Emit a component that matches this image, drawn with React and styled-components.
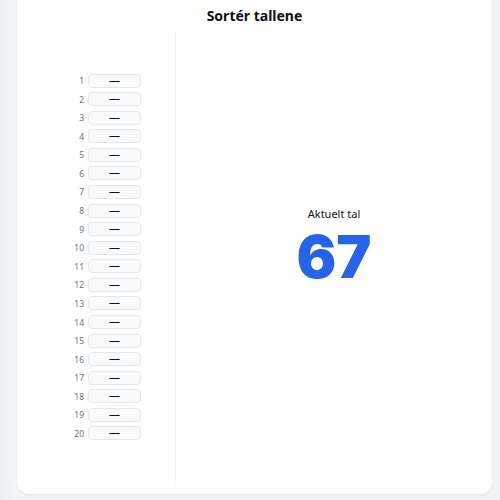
import React from 'react'
import styled, { createGlobalStyle } from 'styled-components'

const GlobalStyle = createGlobalStyle`
  html, body {
    margin: 0;
    padding: 0;
    background: linear-gradient(to right, #eceef1 0px, #f3f4f6 17px);
    font-family: "Noto Sans", "Open Sans", sans-serif;
  }
  #root {
    height: 500px;
    overflow: hidden;
  }
`

const Page = styled.div`
  padding: 0 8px 6px 17px;
  height: 500px;
  box-sizing: border-box;
  display: flex;
`

const Card = styled.div`
  flex: 1;
  background: #fff;
  border-radius: 0 0 12px 12px;
  box-shadow: 0 1px 3px rgba(0, 0, 0, 0.06);
  display: flex;
  flex-direction: column;
  padding-bottom: 12px;
`

const Title = styled.h1`
  margin: 0;
  height: 32px;
  line-height: 32px;
  text-align: center;
  font-size: 14px;
  font-weight: 700;
  color: #111;
`

const Body = styled.div`
  flex: 1;
  display: flex;
`

const Sidebar = styled.div`
  width: 159px;
  border-right: 1px solid #f1f2f4;
  display: flex;
  flex-direction: column;
  justify-content: center;
  padding-left: 40px;
  box-sizing: border-box;
`

const Row = styled.div`
  display: flex;
  align-items: center;
  gap: 4px;
  height: 18.58px;
`

const Index = styled.span`
  width: 27px;
  text-align: right;
  font-size: 8.5px;
  color: #6b7280;
`

const Slot = styled.div`
  width: 53px;
  height: 14px;
  box-sizing: border-box;
  border: 1px solid #e5e7eb;
  border-radius: 4px;
  background: #f9fafb;
  display: flex;
  align-items: center;
  justify-content: center;
  padding-bottom: 3px;
  font-size: 11px;
  line-height: 1;
  color: #111;
`

const Main = styled.div`
  flex: 1;
  display: flex;
  flex-direction: column;
  align-items: center;
  justify-content: center;
  padding-bottom: 22px;
`

const Label = styled.div`
  font-size: 11px;
  line-height: 14px;
  color: #111;
  margin-bottom: 8px;
`

const Current = styled.div`
  font-family: Inter, "Noto Sans", sans-serif;
  font-size: 59px;
  font-weight: 900;
  line-height: 56px;
  color: #2563eb;
`

export default function App() {
  const rows = Array.from({ length: 20 }, (_, i) => i + 1)
  return (
    <>
      <GlobalStyle />
      <Page>
        <Card>
          <Title>Sortér tallene</Title>
          <Body>
            <Sidebar>
              {rows.map((n) => (
                <Row key={n}>
                  <Index>{n}</Index>
                  <Slot>—</Slot>
                </Row>
              ))}
            </Sidebar>
            <Main>
              <Label>Aktuelt tal</Label>
              <Current>67</Current>
            </Main>
          </Body>
        </Card>
      </Page>
    </>
  )
}
